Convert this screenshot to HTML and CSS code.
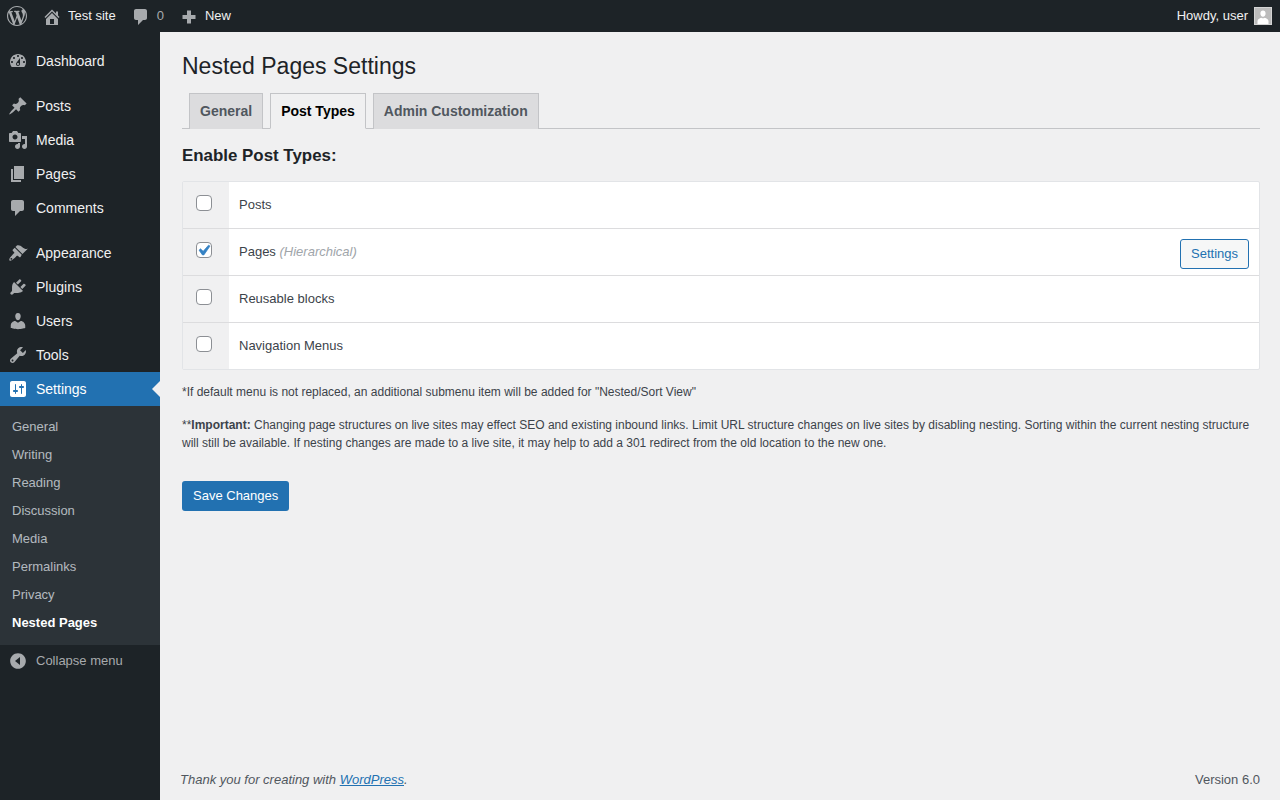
FILE: index.html
```html
<!DOCTYPE html>
<html lang="en">
  <head>
    <meta charset="UTF-8" />
    <title>Nested Pages Settings</title>
    <link rel="stylesheet" href="styles.css">
  </head>
  <body>
    <div class="adminbar">
      <div class="bar-left">
        <a class="bar-logo" href="#">
          <svg class="bar-icon-logo" viewBox="0 0 20 20"><path d="M20 10c0-5.51-4.49-10-10-10C4.48 0 0 4.49 0 10c0 5.52 4.48 10 10 10 5.51 0 10-4.48 10-10zM7.78 15.37L4.37 6.22c.55-.02 1.17-.08 1.17-.08.5-.06.44-1.13-.06-1.11 0 0-1.45.11-2.37.11-.18 0-.37 0-.58-.01C4.12 2.69 6.89 1.07 10 1.07c2.33 0 4.45.87 6.05 2.34-.68-.11-1.65.39-1.65 1.58 0 .74.45 1.36.9 2.1.35.61.55 1.36.55 2.46 0 1.49-1.4 5-1.4 5l-3.03-8.37c.54-.02.82-.17.82-.17.5-.05.44-1.25-.06-1.22 0 0-1.44.12-2.38.12-.87 0-2.33-.12-2.33-.12-.5-.03-.56 1.2-.06 1.22l.92.08 1.26 3.41zM17.41 10c.24-.64.74-1.87.43-4.25.7 1.29 1.05 2.71 1.05 4.25 0 3.29-1.73 6.24-4.4 7.78.97-2.59 1.94-5.2 2.92-7.78zM6.1 18.09C3.12 16.65 1.11 13.53 1.11 10c0-1.3.23-2.48.72-3.59C3.25 10.3 4.67 14.2 6.1 18.09zm4.03-6.63l2.58 6.98c-.86.29-1.74.45-2.71.45-.82 0-1.62-.11-2.38-.34.84-2.38 1.67-4.75 2.51-7.09z"/></svg>
        </a>
        <a class="bar-item" href="#">
          <svg class="bar-icon" viewBox="0 0 20 20"><path d="M16 8.5l1.53 1.53-1.06 1.06L10 4.62l-6.47 6.47-1.06-1.06L10 2.5l4 4v-2h2v4zm-6-2.46l6 5.99V18H4v-5.97zM12 17v-5H8v5h4z"/></svg>
          <span>Test site</span>
        </a>
        <a class="bar-item bar-comments" href="#">
          <svg class="bar-icon" viewBox="0 0 20 20"><path d="M5 2h9c1.1 0 2 .9 2 2v7c0 1.1-.9 2-2 2h-2l-5 5v-5H5c-1.1 0-2-.9-2-2V4c0-1.1.9-2 2-2z"/></svg>
          <span>0</span>
        </a>
        <a class="bar-item" href="#">
          <svg class="bar-icon" viewBox="0 0 20 20"><path d="M16.500 8H12V3.500H8V8H3.500v4H8v4.500h4V12h4.500z"/></svg>
          <span>New</span>
        </a>
      </div>
      <a class="bar-user" href="#">
        <span>Howdy, user</span>
        <svg class="avatar" viewBox="0 0 18 18"><rect width="18" height="18" fill="#d4d4d4"/><rect x="1" y="1" width="16" height="16" fill="#bcbcbc"/><path fill="#fff" d="M9 3.500c1.600 0 2.600 1.300 2.600 2.900 0 1.800-1 3.300-2.600 3.300s-2.600-1.500-2.600-3.300c0-1.600 1-2.900 2.600-2.900zM3.500 14c.2-1.900 2-2.700 3.800-3.300.5.400 1 .6 1.700.6s1.200-.2 1.700-.6c1.800.6 3.600 1.400 3.800 3.300v3h-11z"/></svg>
      </a>
    </div>

    <div class="layout">
      <div class="sidebar">
        <ul class="menu">
          <li class="menu-item">
            <svg class="menu-icon" viewBox="0 0 20 20"><path fill-rule="evenodd" d="M3.760 16h12.480c1.100-1.370 1.760-3.110 1.760-5 0-4.420-3.580-8-8-8s-8 3.580-8 8c0 1.890.66 3.630 1.760 5zM10 4c.55 0 1 .45 1 1s-.45 1-1 1-1-.45-1-1 .45-1 1-1zM6 6c.55 0 1 .45 1 1s-.45 1-1 1-1-.45-1-1 .45-1 1-1zm8 0c.55 0 1 .45 1 1s-.45 1-1 1-1-.45-1-1 .45-1 1-1zm-5.370 5.550L12 7v6c0 1.100-.9 2-2 2s-2-.9-2-2c0-.57.24-1.080.63-1.450zM4 10c.55 0 1 .45 1 1s-.45 1-1 1-1-.45-1-1 .45-1 1-1zm12 0c.55 0 1 .45 1 1s-.45 1-1 1-1-.45-1-1 .45-1 1-1zm-5 3c0-.55-.45-1-1-1s-1 .45-1 1 .45 1 1 1 1-.45 1-1z"/></svg>
            <span>Dashboard</span>
          </li>
          <li class="menu-sep"></li>
          <li class="menu-item">
            <svg class="menu-icon" viewBox="0 0 20 20"><path d="M10.440 3.020l1.820-1.820 6.360 6.350-1.830 1.820c-1.050-.68-2.480-.57-3.410.36l-.75.75c-.92.93-1.040 2.350-.35 3.410l-1.830 1.820-2.410-2.410-2.800 2.790c-.42.42-3.380 2.710-3.800 2.290s1.860-3.390 2.280-3.810l2.790-2.790L4.100 9.360l1.830-1.820c1.050.69 2.480.57 3.400-.36l.75-.75c.93-.92 1.050-2.350.36-3.410z"/></svg>
            <span>Posts</span>
          </li>
          <li class="menu-item">
            <svg class="menu-icon" viewBox="0 0 20 20"><path d="M13 11V4c0-.55-.45-1-1-1h-1.670L9 1H5L3.670 3H2c-.55 0-1 .45-1 1v7c0 .55.45 1 1 1h10c.55 0 1-.45 1-1zM7 4.500c1.380 0 2.500 1.120 2.500 2.500S8.380 9.500 7 9.500 4.500 8.380 4.500 7 5.620 4.500 7 4.500zM14 6h5v10.500c0 1.380-1.120 2.500-2.500 2.500S14 17.880 14 16.500s1.120-2.500 2.500-2.500c.17 0 .34.020.5.050V9h-3V6zm-4 8.050V13h2v3.500c0 1.380-1.120 2.500-2.500 2.500S7 17.880 7 16.500 8.120 14 9.500 14c.17 0 .34.020.5.050z"/></svg>
            <span>Media</span>
          </li>
          <li class="menu-item">
            <svg class="menu-icon" viewBox="0 0 20 20"><path d="M6 15V2h10v13H6zm-1 1h8v2H3V5h2v11z"/></svg>
            <span>Pages</span>
          </li>
          <li class="menu-item">
            <svg class="menu-icon" viewBox="0 0 20 20"><path d="M5 2h9c1.100 0 2 .9 2 2v7c0 1.100-.9 2-2 2h-2l-5 5v-5H5c-1.100 0-2-.9-2-2V4c0-1.100.9-2 2-2z"/></svg>
            <span>Comments</span>
          </li>
          <li class="menu-sep"></li>
          <li class="menu-item">
            <svg class="menu-icon" viewBox="0 0 20 20"><path d="M14.480 11.060L7.410 3.990l1.500-1.500c.5-.56 2.300-.47 3.510.32 1.210.8 1.430 1.280 2.910 2.100 1.180.64 2.450 1.260 4.450.85zm-.71.71L6.700 4.700 4.930 6.470c-.39.39-.39 1.020 0 1.410l1.060 1.060c.39.39.39 1.030 0 1.420-.6.6-6.010 5.470-4.420 7.060 1.590 1.590 6.460-3.820 7.060-4.420.39-.39 1.030-.39 1.420 0l1.060 1.060c.39.39 1.020.39 1.410 0zM4 16.500a.9.9 0 1 1-1.300-1.300.9.9 0 0 1 1.300 1.300z"/></svg>
            <span>Appearance</span>
          </li>
          <li class="menu-item">
            <svg class="menu-icon" viewBox="0 0 20 20"><path d="M13.110 4.360L9.870 7.600 8 5.730l3.240-3.240c.35-.34 1.050-.2 1.560.32.52.51.66 1.210.31 1.550zm-8 1.770l.91-1.120 9.010 9.010-1.190.84c-.71.71-2.630 1.160-3.820 1.160H6.140L4.900 17.260c-.59.59-1.540.59-2.120 0-.59-.58-.59-1.530 0-2.120l1.240-1.240v-3.880c0-1.130.4-3.190 1.090-3.890zm7.260 3.970l3.240-3.240c.34-.35 1.040-.21 1.550.31.52.51.66 1.210.31 1.550l-3.240 3.250z"/></svg>
            <span>Plugins</span>
          </li>
          <li class="menu-item">
            <svg class="menu-icon" viewBox="0 0 20 20"><path d="M10 9.250c-2.270 0-2.730-3.440-2.730-3.440C7 4.020 7.820 2 9.970 2c2.160 0 2.980 2.020 2.710 3.810 0 0-.41 3.440-2.680 3.440zm0 2.570L12.720 10c2.390 0 4.520 2.330 4.520 4.530v2.490s-3.650 1.130-7.240 1.130c-3.650 0-7.240-1.130-7.240-1.130v-2.490c0-2.250 1.940-4.480 4.470-4.480z"/></svg>
            <span>Users</span>
          </li>
          <li class="menu-item">
            <svg class="menu-icon" viewBox="0 0 20 20"><path d="M16.680 9.770c-1.340 1.340-3.300 1.670-4.950.99l-5.410 6.520c-.99.99-2.590.99-3.580 0s-.99-2.590 0-3.570l6.520-5.420c-.68-1.650-.35-3.610.99-4.950 1.280-1.280 3.120-1.620 4.720-1.060l-2.890 2.890 2.820 2.820 2.860-2.870c.53 1.580.18 3.390-1.080 4.650zM3.810 16.210c.4.39 1.040.39 1.430 0 .4-.4.4-1.040 0-1.430-.39-.4-1.030-.4-1.430 0-.39.39-.39 1.030 0 1.430z"/></svg>
            <span>Tools</span>
          </li>
          <li class="menu-item current">
            <svg class="menu-icon" viewBox="0 0 20 20"><path d="M18 16V4c0-1.100-.9-2-2-2H4c-1.100 0-2 .9-2 2v12c0 1.100.9 2 2 2h12c1.100 0 2-.9 2-2zM8 11h1c.55 0 1 .45 1 1s-.45 1-1 1H8v1.500c0 .28-.22.5-.5.5s-.5-.22-.5-.5V13H6c-.55 0-1-.45-1-1s.45-1 1-1h1V5.500c0-.28.22-.5.5-.5s.5.22.5.5V11zm5-2h-1c-.55 0-1-.45-1-1s.45-1 1-1h1V5.500c0-.28.22-.5.5-.5s.5.22.5.5V7h1c.55 0 1 .45 1 1s-.45 1-1 1h-1v5.500c0 .28-.22.5-.5.5s-.5-.22-.5-.5V9z"/></svg>
            <span>Settings</span>
          </li>
        </ul>
        <ul class="submenu">
          <li>General</li>
          <li>Writing</li>
          <li>Reading</li>
          <li>Discussion</li>
          <li>Media</li>
          <li>Permalinks</li>
          <li>Privacy</li>
          <li class="current">Nested Pages</li>
        </ul>
        <div class="collapse">
          <svg class="menu-icon" viewBox="0 0 20 20"><path d="M10 2.160c4.330 0 7.840 3.510 7.840 7.840s-3.510 7.840-7.840 7.840S2.160 14.330 2.160 10 5.670 2.160 10 2.160zM12 14V6l-5 4z"/></svg>
          <span>Collapse menu</span>
        </div>
      </div>

      <div class="main">
        <div class="wrap">
          <h1>Nested Pages Settings</h1>
          <div class="tabs">
            <a class="tab" href="#">General</a>
            <a class="tab active" href="#">Post Types</a>
            <a class="tab" href="#">Admin Customization</a>
          </div>
          <h3>Enable Post Types:</h3>
          <div class="post-types">
            <div class="type-row">
              <div class="type-check"><span class="checkbox"></span></div>
              <div class="type-name">Posts</div>
            </div>
            <div class="type-row">
              <div class="type-check">
                <span class="checkbox">
                  <svg viewBox="0 0 20 20"><path d="M14.830 4.890l1.340.94-5.810 8.380H9.020L5.780 9.670l1.340-1.250 2.570 2.400z"/></svg>
                </span>
              </div>
              <div class="type-name">Pages <em>(Hierarchical)</em></div>
              <a class="btn-settings" href="#">Settings</a>
            </div>
            <div class="type-row">
              <div class="type-check"><span class="checkbox"></span></div>
              <div class="type-name">Reusable blocks</div>
            </div>
            <div class="type-row">
              <div class="type-check"><span class="checkbox"></span></div>
              <div class="type-name">Navigation Menus</div>
            </div>
          </div>
          <p class="note">*If default menu is not replaced, an additional submenu item will be added for "Nested/Sort View"</p>
          <p class="note">**<strong>Important:</strong> Changing page structures on live sites may effect SEO and existing inbound links. Limit URL structure changes on live sites by disabling nesting. Sorting within the current nesting structure will still be available. If nesting changes are made to a live site, it may help to add a 301 redirect from the old location to the new one.</p>
          <a class="btn-save" href="#">Save Changes</a>
        </div>
        <div class="footer">
          <span class="thanks">Thank you for creating with <a href="#">WordPress</a>.</span>
          <span class="version">Version 6.0</span>
        </div>
      </div>
    </div>
  </body>
</html>
```

FILE: styles.css
```css
* {
  box-sizing: border-box;
}
html,
body {
  height: 100%;
}
body {
  margin: 0;
  background-color: #f0f0f1;
  color: #3c434a;
  font-family: "Liberation Sans", Arial, sans-serif;
  font-size: 13px;
  overflow: hidden;
}
ul {
  list-style: none;
  margin: 0;
  padding: 0;
}
a {
  text-decoration: none;
}

/* top bar */
.adminbar {
  display: flex;
  justify-content: space-between;
  height: 32px;
  padding-right: 8px;
  background-color: #1d2327;
  color: #f0f0f1;
}
.bar-left {
  display: flex;
}
.bar-logo {
  display: flex;
  align-items: center;
  padding: 0 7px;
}
.bar-icon-logo {
  width: 20px;
  height: 20px;
  fill: #a7aaad;
}
.bar-item {
  display: flex;
  align-items: center;
  gap: 6px;
  padding: 0 7px;
  margin-left: 1px;
  color: #f0f0f1;
  height: 31px;
}
.bar-icon {
  width: 20px;
  height: 20px;
  margin-top: 2px;
  fill: #a7aaad;
}
.bar-comments {
  color: #a7aaad;
}
.bar-user {
  display: flex;
  align-items: center;
  gap: 6px;
  height: 31px;
  color: #f0f0f1;
}
.avatar {
  width: 18px;
  height: 18px;
  margin-top: 1px;
}

/* sidebar */
.layout {
  display: flex;
  height: 768px;
}
.sidebar {
  flex: 0 0 160px;
  background-color: #1d2327;
  padding-top: 12px;
}
.menu-item {
  position: relative;
  display: flex;
  align-items: center;
  height: 34px;
  padding-left: 8px;
  gap: 8px;
  color: #f0f0f1;
  font-size: 14px;
}
.menu-icon {
  flex: none;
  width: 20px;
  height: 20px;
  fill: #a7aaad;
}
.menu-sep {
  height: 11px;
}
.menu-item.current {
  background-color: #2271b1;
  color: #fff;
}
.menu-item.current .menu-icon {
  fill: #fff;
}
.menu-item.current::after {
  content: "";
  position: absolute;
  right: 0;
  top: 9px;
  border: 8px solid transparent;
  border-right-color: #f0f0f1;
}
.submenu {
  padding: 7px 0 8px;
  background-color: #2c3338;
  color: rgba(240, 246, 252, 0.7);
}
.submenu li {
  height: 28px;
  padding-left: 12px;
  line-height: 28px;
}
.submenu li.current {
  color: #fff;
  font-weight: 600;
}
.collapse {
  display: flex;
  gap: 8px;
  padding: 6px 0 0 8px;
  color: #a7aaad;
}
.collapse span {
  margin-top: 2px;
}

/* main area */
.main {
  flex: 1;
  display: flex;
  flex-direction: column;
  padding-left: 20px;
}
.wrap {
  flex: 1;
  margin: 0 20px 0 2px;
  padding-top: 20px;
}
h1 {
  margin: 0 0 12px;
  color: #1d2327;
  font-size: 23px;
  font-weight: 400;
  line-height: 29px;
}
.tabs {
  display: flex;
  gap: 7px;
  height: 36px;
  padding-left: 7px;
  border-bottom: 1px solid #c3c4c7;
}
.tab {
  height: 36px;
  padding: 0 10px;
  border: 1px solid #c3c4c7;
  border-bottom: none;
  background-color: #dcdcde;
  color: #50575e;
  font-size: 14px;
  font-weight: 600;
  line-height: 35px;
}
.tab.active {
  background-color: #f0f0f1;
  color: #000;
  border-bottom: 1px solid #f0f0f1;
}
h3 {
  margin: 16px 0 15px;
  color: #1d2327;
  font-size: 16.9px;
  font-weight: 600;
  line-height: 21px;
}

.post-types {
  border: 1px solid #e2e4e7;
  border-radius: 2px;
  background-color: #fff;
}
.type-row {
  display: flex;
  align-items: stretch;
  height: 47px;
  border-bottom: 1px solid #dcdcde;
}
.type-row:last-child {
  height: 46px;
  border-bottom: none;
}
.type-check {
  flex: 0 0 46px;
  padding: 13px 0 0 13px;
  background-color: #f0f0f1;
}
.checkbox {
  display: block;
  width: 16px;
  height: 16px;
  border: 1px solid #8c8f94;
  border-radius: 4px;
  background-color: #fff;
}
.checkbox svg {
  display: block;
  width: 21px;
  height: 21px;
  margin: -3px 0 0 -4px;
  fill: #3582c4;
  stroke: #3582c4;
  stroke-width: 0.7;
}
.type-name {
  flex: 1;
  padding-left: 10px;
  line-height: 45px;
}
.type-name em {
  color: #a0a5aa;
}
.btn-settings {
  align-self: flex-start;
  height: 30px;
  margin: 10px 10px 0 0;
  padding: 0 10px;
  border: 1px solid #2271b1;
  border-radius: 3px;
  background-color: #f6f7f7;
  color: #2271b1;
  line-height: 28px;
}
.note {
  margin: 0 0 15px;
  font-size: 12px;
  line-height: 18px;
}
.post-types + .note {
  margin-top: 13px;
}
.note strong {
  font-weight: 600;
}
.btn-save {
  display: inline-block;
  height: 30px;
  margin-top: 14px;
  padding: 0 11px;
  border-radius: 3px;
  background-color: #2271b1;
  color: #fff;
  line-height: 29px;
}

.footer {
  display: flex;
  justify-content: space-between;
  padding: 0 20px 11px 0;
  line-height: 18px;
  color: #50575e;
}
.thanks {
  font-style: italic;
}
.thanks a {
  color: #2271b1;
  text-decoration: underline;
}
```
